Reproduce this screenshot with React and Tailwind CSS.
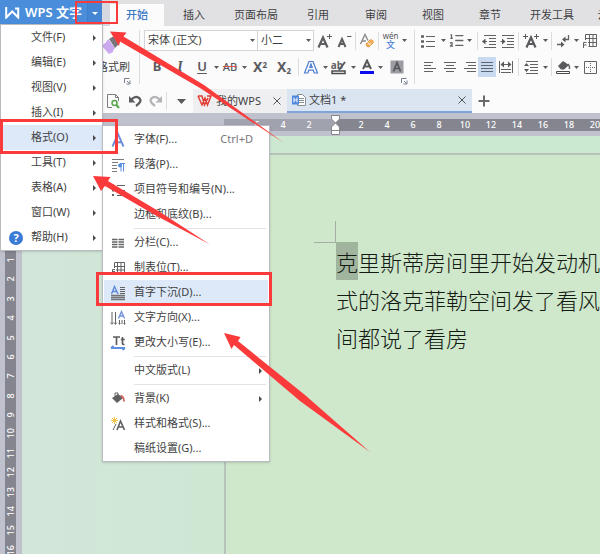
import React, { useState } from "react";
import { ListOrdered } from "lucide-react";

const ribbonTabs = [
  { label: "插入", width: "w-[60px]" },
  { label: "页面布局", width: "w-16" },
  { label: "引用", width: "w-[60px]" },
  { label: "审阅", width: "w-14" },
  { label: "视图", width: "w-[58px]" },
  { label: "章节", width: "w-14" },
  { label: "开发工具", width: "w-[68px]" },
  { label: "云服务", width: "w-14" },
];

const mainMenu = [
  "文件(F)",
  "编辑(E)",
  "视图(V)",
  "插入(I)",
  "格式(O)",
  "工具(T)",
  "表格(A)",
  "窗口(W)",
  "帮助(H)",
];

const formatMenu = [
  { label: "字体(F)...", icon: FontIcon, shortcut: "Ctrl+D" },
  { label: "段落(P)...", icon: ParagraphIcon },
  { label: "项目符号和编号(N)...", icon: ListIcon },
  { label: "边框和底纹(B)..." },
  { divider: true },
  { label: "分栏(C)...", icon: ColumnsIcon },
  { label: "制表位(T)...", icon: TabStopIcon },
  { label: "首字下沉(D)...", icon: DropCapIcon },
  { label: "文字方向(X)...", icon: DirectionIcon },
  { label: "更改大小写(E)...", icon: CaseIcon },
  { divider: true },
  { label: "中文版式(L)", more: true },
  { divider: true },
  { label: "背景(K)", icon: BackgroundIcon, more: true },
  { label: "样式和格式(S)...", icon: StylesIcon },
  { label: "稿纸设置(G)..." },
];

const rulerLeft = ["6", "4", "2"];
const rulerRight = ["2", "4", "6", "8", "10", "12", "14", "16", "18", "20"];

function Svg({ size = 16, children }) {
  return (
    <svg
      width={size}
      height={size}
      viewBox={`0 0 ${size} ${size}`}
      fill="none"
      stroke="#626265"
      className="shrink-0"
      aria-hidden="true">
      {children}
    </svg>
  );
}

function FontIcon() {
  return (
    <Svg>
      <path d="M2.5 14.5 8 2l5.5 12.5M4.500 10.200h7" stroke="#6d8fd8" strokeWidth="1.900" />
    </Svg>
  );
}
function ParagraphIcon() {
  return (
    <Svg>
      <path d="M2 2.500h12M2 5.500h6M2 8.500h5M2 11.500h5M2 14.500h5" stroke="#7b7b7e" />
      <path d="M11 14.500V6.500M13.500 14.500V6.500M15 6.500h-5" stroke="#5b8fe0" />
      <circle cx="10" cy="8.500" r="2" fill="#5b8fe0" stroke="none" />
    </Svg>
  );
}
function ListIcon() {
  return (
    <Svg>
      <path d="M7 3.500h8M7 8.500h8M7 13.500h8" />
      <path d="M2 3.500h2M2 8.500h2M2 13h2" strokeWidth="2" />
    </Svg>
  );
}
function ColumnsIcon() {
  return (
    <Svg>
      <path
        d="M2 4.500h5.500M2 7h5.500M2 9.500h5.500M2 12h5.500M8.500 4.500H14M8.500 7H14M8.500 9.500H14M8.500 12H14"
        stroke="#666669"
        strokeWidth="1.300"
      />
    </Svg>
  );
}
function TabStopIcon() {
  return (
    <Svg>
      <path d="M4.500 8V2.500h10v11h-7M7.500 2.500v11M11 2.500v11M4.500 6.500h10M6 10h8.500" />
      <path d="M2.500 14V9.500H5M2.500 11.500H5" />
    </Svg>
  );
}
function DropCapIcon() {
  return (
    <Svg>
      <path d="m1.500 9 3-7.500L8 9M2.600 6.500h4.200" stroke="#5f8adb" strokeWidth="1.400" />
      <path d="M10 2.500h5M10 4.500h5M10 6.500h5M10 8.500h5" />
      <path d="M1 10.500h14M1 12.500h14M1 14.500h14" stroke="#737477" strokeWidth="1.300" />
    </Svg>
  );
}
function DirectionIcon() {
  return (
    <Svg>
      <path d="M2 2v12M5.500 2v12M9.500 10v4M12 10v4M14.500 10v4" />
      <path d="M.5 12.500 2 14.500l1.500-2M4 12.500l1.500 2 1.500-2M8.500 13.500l1 1 1-1M13.500 13.500l1 1 1-1" strokeWidth=".8" />
      <path d="m8.500 8.500 3-7 3 7M9.500 6h4" stroke="#6d8fd8" strokeWidth="1.300" />
    </Svg>
  );
}
function CaseIcon() {
  return (
    <Svg>
      <path d="M3 2h7M6.500 2v8M12.500 2v6.500q0 1 2 1M10.800 4.500h4" stroke="#5d5d60" strokeWidth="1.700" />
      <path d="M1 13h14M1 13l2.500-2M15 13l-2.500 2" stroke="#5b8fe0" strokeWidth="1.800" />
    </Svg>
  );
}
function BackgroundIcon() {
  return (
    <Svg>
      <path d="M2 7 8 3l5 4-6 5z" fill="#5f5f62" stroke="none" />
      <path d="M5 5V2h3v3" />
      <path d="M10.500 4.500q3.500 1 3.500 6" stroke="#d3645f" strokeWidth="1.800" />
    </Svg>
  );
}
function StylesIcon() {
  return (
    <Svg>
      <path d="M4.500 1v7M1 4.500h7M2 2l5 5M7 2 2 7" stroke="#f1c14b" />
      <path d="m7 14 3.500-9 4 9M8 11h5" stroke="#5f5f62" strokeWidth="1.600" />
      <path d="m3 14 3-6" />
    </Svg>
  );
}

function Caret() {
  return (
    <span className="flex w-2 shrink-0 justify-center">
      <svg width="5" height="3" viewBox="0 0 5 3" aria-hidden="true">
        <path d="M0 0h5L2.500 3z" fill="#5b5b5e" />
      </svg>
    </span>
  );
}

function Sep() {
  return (
    <span className="flex w-[5px] shrink-0 justify-center">
      <span className="h-[18px] w-px bg-[#dddde0]" />
    </span>
  );
}

function Tool({ label, width = "w-5", active, children }) {
  return (
    <button
      type="button"
      aria-label={label}
      className={`flex h-5 shrink-0 items-center justify-center ${width} ${
        active ? "bg-[#c9daf0]" : ""
      }`}>
      {children}
    </button>
  );
}

function Launcher() {
  return (
    <svg width="7" height="7" viewBox="0 0 7 7" fill="none" stroke="#77808f" aria-hidden="true">
      <path d="M.5 5V.5h5M3 3l2.500 2.500M6 2.500v3.500H2.500" />
    </svg>
  );
}

function Combo({ label, value, width }) {
  return (
    <label className={`flex h-[21px] shrink-0 items-center border border-[#d4d4d8] bg-white pr-px ${width}`}>
      <select
        aria-label={label}
        className="h-full min-w-0 flex-1 appearance-none bg-transparent pl-[3px] text-[11px] text-[#3f3f42] outline-none">
        <option>{value}</option>
      </select>
      <Caret />
    </label>
  );
}

function TitleBar({ tab, setTab }) {
  return (
    <div className="flex h-[26px] shrink-0 items-end bg-[#e1e1e3]">
      <div className="flex h-[26px] w-[102px] shrink-0 bg-[#4a8edb] text-white">
        <button
          type="button"
          className="flex h-[26px] w-[87px] items-center gap-[5px] pl-[5px] text-[13px] font-semibold whitespace-nowrap">
          <svg width="15" height="12" viewBox="0 0 15 12" fill="none" stroke="#fff" strokeWidth="2" className="shrink-0" aria-hidden="true">
            <path d="M1.200 0v10.500l6-6 6 6V1.500H10" />
          </svg>
          WPS 文字
        </button>
        <button
          type="button"
          aria-label="菜单"
          className="flex flex-1 items-center justify-center border-l border-[#3f7fc9] bg-[#4486d3]">
          <svg width="6" height="3" viewBox="0 0 6 3" aria-hidden="true">
            <path d="M0 0h6L3 3z" fill="#fff" />
          </svg>
        </button>
      </div>
      <div className="h-[26px] w-2 shrink-0 bg-[#d6d8df]" />
      <nav className="flex h-[22px] min-w-0 flex-1 overflow-hidden">
        <button
          type="button"
          onClick={() => setTab("开始")}
          className={`h-[22px] w-[54px] shrink-0 text-[11px] ${
            tab === "开始" ? "bg-[#fbfbfc] font-medium text-[#3b78c6]" : ""
          }`}>
          开始
        </button>
        {ribbonTabs.map((item) => (
          <button
            key={item.label}
            type="button"
            onClick={() => setTab(item.label)}
            className={`h-[22px] shrink-0 text-[11px] whitespace-nowrap ${item.width} ${
              tab === item.label ? "bg-[#fbfbfc] text-[#3b78c6]" : ""
            }`}>
            {item.label}
          </button>
        ))}
      </nav>
    </div>
  );
}

function ClipboardGroup() {
  return (
    <div className="flex w-[139px] shrink-0 flex-col items-end pt-[9px] pr-[9px]">
      <div className="flex w-[34px] flex-col items-center">
        <svg width="20" height="20" viewBox="0 0 20 20" className="mr-[7px]" aria-hidden="true">
          <path d="m9 4 5-3 5 8-4 4z" fill="#77777a" />
          <path d="m8 4 7 9q-2 2-2 4l-4 2-8-9q4 0 7-6z" fill="#cba9ee" />
        </svg>
      </div>
      <button type="button" className="mt-1 text-[11px] leading-4 whitespace-nowrap">
        格式刷
      </button>
      <div className="mt-[3px] -mr-px">
        <Launcher />
      </div>
    </div>
  );
}

function FontGroup() {
  return (
    <div className="flex w-[275px] shrink-0 flex-col gap-[6px]">
      <div className="flex h-[21px] items-center pl-1">
        <Combo label="字体" value="宋体 (正文)" width="w-[114px]" />
        <Combo label="字号" value="小二" width="-ml-px w-[57px]" />
        <Tool label="增大字号" width="w-[22px]">
          <Svg>
            <path d="m1.500 14.500 4.500-10 4.500 10M3.500 11h5.500" stroke="#5f5f62" strokeWidth="2.200" />
            <path d="M10 3.500h5M12.500 1v5" stroke="#5f5f62" />
          </Svg>
        </Tool>
        <Tool label="减小字号" width="w-[17px]">
          <Svg>
            <path d="m1.500 14 3.500-8 3.500 8M3 11h4.500" stroke="#5f5f62" strokeWidth="2" />
            <path d="M10 3.500h4.500" stroke="#5f5f62" />
          </Svg>
        </Tool>
        <Sep />
        <Tool label="清除格式" width="w-[18px]">
          <Svg>
            <path d="m1.500 11 4.500-9.500 3 6M3.500 8H7" stroke="#8a8a8d" strokeWidth="1.400" />
            <path d="m7 11 4-4q2-1 3 1t-1 3l-3 3q-3 0-3-3z" fill="#f3b468" stroke="#e89a3f" />
            <path d="M9 9.500 12 12.500" stroke="#fff" />
          </Svg>
        </Tool>
        <Sep />
        <Tool label="拼音指南" width="w-[19px]">
          <span className="flex flex-col items-center text-[#55555a]">
            <span className="text-[8px] leading-[8px]">wén</span>
            <span className="text-[9px] leading-[10px] font-medium text-[#4e83dc]">文</span>
          </span>
        </Tool>
        <Caret />
      </div>
      <div className="flex h-5 items-center pl-[6px] text-[#5a5a5d]">
        <Tool label="加粗" width="w-[22px]">
          <b className="text-[13px]">B</b>
        </Tool>
        <Tool label="倾斜" width="w-6">
          <i className="font-serif text-sm font-bold">I</i>
        </Tool>
        <Tool label="下划线">
          <span className="text-[13px] font-semibold underline underline-offset-2">U</span>
        </Tool>
        <Caret />
        <Tool label="删除线">
          <span className="text-[11px] font-medium line-through decoration-[#d9534f]">AB</span>
        </Tool>
        <Caret />
        <Tool label="上标" width="w-6">
          <span className="text-sm leading-none font-bold">
            X<sup className="text-[8px]">2</sup>
          </span>
        </Tool>
        <Tool label="下标" width="w-6">
          <span className="text-sm leading-none font-bold">
            X<sub className="text-[8px]">2</sub>
          </span>
        </Tool>
        <Sep />
        <Tool label="文字效果">
          <Svg>
            <path d="M1.500 14 6 2.500h4L14.500 14h-3.300l-1-2.800H5.800l-1 2.800zM6.800 8.500h2.400L8 5z" stroke="#4d7bd0" strokeWidth="1.200" />
          </Svg>
        </Tool>
        <Caret />
        <Tool label="突出显示">
          <Svg>
            <text x="6" y="10" fontSize="10" fontWeight="700" textAnchor="middle" fill="#5f5f62" stroke="none">
              ab
            </text>
            <path d="m8 11 6-8" stroke="#5a5a5d" strokeWidth="2" />
            <path d="M1 12h13v2.500H1z" fill="#fff" stroke="#4b4b4e" strokeWidth="1.500" />
          </Svg>
        </Tool>
        <Caret />
        <Tool label="字体颜色" width="w-[19px]">
          <Svg>
            <path d="m4 10 4-8.500L12 10M5.500 7.500h5" stroke="#5a5a5d" strokeWidth="2" />
            <path d="M1 13.500h14" stroke="#0c0cf0" strokeWidth="3" />
          </Svg>
        </Tool>
        <Caret />
        <Tool label="字符底纹" width="w-[26px]">
          <Svg>
            <path d="M1.500 1.500h13v13h-13z" fill="#9b9da3" stroke="none" />
            <path d="m4.500 12.500 3.500-9 3.500 9M5.800 9.500h4.500" stroke="#55565b" strokeWidth="1.700" />
          </Svg>
        </Tool>
      </div>
      <div className="-mt-[5px] flex justify-end pr-[7px]">
        <Launcher />
      </div>
    </div>
  );
}

function ParagraphGroup() {
  return (
    <div className="flex min-w-0 flex-1 flex-col gap-[6px] overflow-hidden">
      <div className="flex h-[21px] items-center pl-[2px]">
        <Tool label="项目符号" width="w-[22px]">
          <Svg>
            <path d="M6 3.500h9M6 8.500h9M6 13.500h9" />
            <path d="M1 3.500h3M1 8.500h3M1 13.500h3" strokeWidth="2.500" />
          </Svg>
        </Tool>
        <Caret />
        <Tool label="编号" width="w-[18px]">
          <ListOrdered size={17} strokeWidth={1.8} color="#626265" className="shrink-0" />
        </Tool>
        <Caret />
        <span className="w-[2px] shrink-0" />
        <Sep />
        <Tool label="减少缩进" width="w-[18px]">
          <Svg>
            <path d="M3 2.500h12M8 5.500h7M8 8.500h7M8 11.500h7M3 14.500h12M1.500 8.500H6" />
            <path d="M1 8.500 4.500 5.500v6z" fill="#5a5a5d" stroke="none" />
          </Svg>
        </Tool>
        <Tool label="增加缩进" width="w-[18px]">
          <Svg>
            <path d="M3 2.500h12M8 5.500h7M8 8.500h7M8 11.500h7M3 14.500h12M1.500 8.500H6" />
            <path d="M6.500 8.500 3 5.500v6z" fill="#5a5a5d" stroke="none" />
          </Svg>
        </Tool>
        <Sep />
        <Tool label="中文版式">
          <Svg>
            <path d="m3.500 14.500 4.500-10 4.500 10M5 11h6" stroke="#5a5a5d" strokeWidth="2.200" />
            <path d="M0 3.500h5M2.500 1v5M11 3.500h5M13.500 1v5" stroke="#5a5a5d" />
          </Svg>
        </Tool>
        <Caret />
        <Sep />
        <Tool label="显示段落标记" width="w-[18px]">
          <Svg>
            <path d="M13.500 2v4.500H9M2 11.500h5" strokeWidth="1.300" />
            <path d="m7 6.500 3.500-3v6zM9.500 11.500 6 8.500v6z" fill="#5a5a5d" stroke="none" />
          </Svg>
        </Tool>
        <Caret />
        <Tool label="表格">
          <Svg>
            <path d="M3.500 7V1.500h11v12h-8M7.500 1.500v12M11 1.500v12M3.500 5.500h11M6 9.500h8.500M1.500 15V9.500h3M1.500 12h3" />
          </Svg>
        </Tool>
      </div>
      <div className="flex h-5 items-center pl-[5px]">
        <Tool label="左对齐">
          <Svg>
            <path d="M2 3.500h9M2 6.500h7M2 9.500h12M2 12.500h9" />
          </Svg>
        </Tool>
        <Tool label="居中">
          <Svg>
            <path d="M2 3.500h12M4 6.500h8M2 9.500h12M4 12.500h8" />
          </Svg>
        </Tool>
        <Tool label="右对齐" width="w-[18px]">
          <Svg>
            <path d="M5 3.500h10M7 6.500h8M3 9.500h12M6 12.500h9" />
          </Svg>
        </Tool>
        <Tool label="两端对齐" width="w-[18px]" active>
          <Svg>
            <path d="M2 3.500h12M2 6.500h12M2 9.500h12M2 12.500h12" stroke="#5d6775" />
          </Svg>
        </Tool>
        <Tool label="分散对齐">
          <Svg>
            <path d="M1.500 2v12M14.500 2v12M3 5.500h10M3 10.500h10M3 13.500h10" />
            <path d="M2.500 5.500 6 2.500v6zM13.500 5.500 10 2.500v6z" fill="#5a5a5d" stroke="none" />
          </Svg>
        </Tool>
        <Sep />
        <Tool label="行距">
          <Svg>
            <path d="M3 2.500h12M7 5.500h8M7 8.500h8M7 11.500h8M3 14.500h12" />
            <path d="m1 7 2.500-3L6 7zM1 10l2.500 3L6 10z" fill="#5a5a5d" stroke="none" />
          </Svg>
        </Tool>
        <Caret />
        <Sep />
        <Tool label="底纹颜色" width="w-[18px]">
          <Svg>
            <path d="m3 7 5-5 6 4-5 4.500H6z" fill="#5a5a5d" stroke="none" />
            <path d="M13 5q2 2 1.500 5" strokeWidth="1.500" />
            <path d="M1.500 12.500h13v2h-13z" fill="#fff" stroke="#4b4b4e" />
          </Svg>
        </Tool>
        <Caret />
        <Tool label="边框">
          <Svg>
            <path d="M2.500 2.500h12v12h-12z" />
            <path d="M8.500 4v9M4 8.500h9" strokeDasharray="1 1" />
          </Svg>
        </Tool>
      </div>
    </div>
  );
}

function Ribbon() {
  return (
    <div className="flex h-[63px] shrink-0 overflow-hidden bg-[#fbfbfc]">
      <ClipboardGroup />
      <div className="mt-1 h-[54px] w-px shrink-0 bg-[#dcdcdf]" />
      <div className="flex min-w-0 flex-1 pt-1">
        <FontGroup />
        <div className="-ml-px h-[54px] w-px shrink-0 bg-[#dcdcdf]" />
        <ParagraphGroup />
      </div>
    </div>
  );
}

function CloseIcon() {
  return (
    <svg width="8" height="8" viewBox="0 0 8 8" stroke="#55565a" aria-hidden="true">
      <path d="m.5.5 7 7M7.500.5l-7 7" />
    </svg>
  );
}

function DocumentTabs() {
  return (
    <div className="flex h-6 shrink-0 items-stretch overflow-hidden bg-[#fbfbfc] pl-[103px]">
      <div className="flex w-[90px] shrink-0 items-center">
        <Tool label="打印预览">
          <Svg>
            <path d="M7 14.500H2.500v-13h8l3 3V8M10.500 1.500v3h3" stroke="#7d7d80" />
            <circle cx="9.500" cy="10" r="2.500" stroke="#5aa84c" strokeWidth="1.500" />
            <path d="m11.500 12 2.500 3" stroke="#5aa84c" strokeWidth="2" />
          </Svg>
        </Tool>
        <Tool label="撤销" width="w-6">
          <Svg>
            <path d="M4 7q4-5 8-2t-3 8" stroke="#5d5d60" strokeWidth="2.200" />
            <path d="M2 3v6.500h6.500z" fill="#5d5d60" stroke="none" />
          </Svg>
        </Tool>
        <Tool label="恢复" width="w-[17px]">
          <Svg>
            <path d="M12 7q-4-5-8-2t3 8" stroke="#b4b4b7" strokeWidth="2.200" />
            <path d="M14 3v6.500H7.500z" fill="#b4b4b7" stroke="none" />
          </Svg>
        </Tool>
        <Sep />
        <button type="button" aria-label="更多" className="flex flex-1 justify-center">
          <svg width="9" height="5" viewBox="0 0 9 5" aria-hidden="true">
            <path d="M0 0h9L4.500 5z" fill="#5b5b5e" />
          </svg>
        </button>
      </div>
      <div className="flex w-[94px] shrink-0 items-center bg-[#efeff1] pr-[6px] pl-1">
        <svg width="15" height="12" viewBox="0 0 15 12" fill="none" stroke="#e23d36" strokeWidth="1.500" aria-hidden="true">
          <path d="M1 1h4l2.500 9L11 3M1 1l4 9 3-7 2.500 7L14 1h-4" />
        </svg>
        <button type="button" className="ml-1 flex-1 text-left text-[11px] whitespace-nowrap">
          我的WPS
        </button>
        <button type="button" aria-label="关闭 我的WPS">
          <CloseIcon />
        </button>
      </div>
      <div className="flex w-[185px] shrink-0 items-center border-b-2 border-[#7fa5d8] bg-[#dbe5f2] pr-[6px] pl-1">
        <Svg>
          <path d="M6.500 2.500h5l3 3v8h-8zM8 6.500h5M8 8.500h5M8 10.500h5" stroke="#8b8d94" fill="#fff" />
          <path d="M1 3.500h7v9H1z" fill="#4d86dc" stroke="none" />
          <path d="M3 5.500v5M6 5.500v5M3 8h3" stroke="#fff" />
        </Svg>
        <button type="button" className="ml-[2px] flex-1 text-left text-[11px]">
          文档1 *
        </button>
        <button type="button" aria-label="关闭 文档1">
          <CloseIcon />
        </button>
      </div>
      <button type="button" aria-label="新建" className="flex w-6 shrink-0 items-center justify-center">
        <svg width="12" height="12" viewBox="0 0 12 12" stroke="#6a6a6d" strokeWidth="2" aria-hidden="true">
          <path d="M6 .5v11M.5 6h11" />
        </svg>
      </button>
    </div>
  );
}

function HorizontalRuler() {
  return (
    <div className="flex h-[23px] shrink-0 items-center overflow-hidden bg-[#bfc2cc] pl-56 text-[9px] leading-3 font-medium text-white">
      <div className="flex h-3 w-28 shrink-0 bg-[#a0a2ad] pl-5">
        {rulerLeft.map((n) => (
          <span key={n} className="w-[26px] text-center">
            {n}
          </span>
        ))}
      </div>
      <div className="relative flex h-3 flex-1 bg-[#84858e] pl-3">
        <svg
          width="9"
          height="20"
          viewBox="0 0 9 20"
          fill="#fff"
          stroke="#85868c"
          className="absolute -top-1 -left-[5px]"
          aria-hidden="true">
          <path d="M.5.5h8v3.500l-4 4-4-4zM.5 15.500V12l4-4 4 4v7.500h-8zM.5 15.500h8" />
        </svg>
        {rulerRight.map((n) => (
          <span key={n} className="w-[26px] shrink-0 text-center">
            {n}
          </span>
        ))}
      </div>
    </div>
  );
}

function VerticalRuler() {
  return (
    <div className="flex w-[22px] shrink-0 bg-[#bfc2cc] pl-[5px]">
      <div className="h-full w-[11px] bg-[#84858e] pt-[114px]">
        <div className="grid h-[310px] auto-rows-fr text-[9px] leading-[11px] font-medium text-white">
          {Array.from({ length: 16 }, (_, i) => (
            <span
              key={i}
              className="flex rotate-180 items-center justify-center [writing-mode:vertical-rl]">
              {i + 1}
            </span>
          ))}
        </div>
      </div>
    </div>
  );
}

function Page() {
  return (
    <div className="flex min-w-0 flex-1 bg-linear-to-r from-[#d3e6da] to-[#cbe8d0] to-50% pt-[17px] pl-[202px]">
      <div className="min-w-0 flex-1 overflow-hidden border-t-2 border-l-2 border-[#b7c3ba] bg-[#cfe7cb] pt-[66px] pl-[88px]">
        <div className="h-[22px] w-[22px] border-r border-b border-[#a5aea4]" />
        <p className="-mt-px pl-[22px] font-['Noto_Sans_CJK_SC',sans-serif] text-[22px] leading-[38px] font-light whitespace-nowrap text-[#141a14]">
          <span className="inline-block bg-[#a1b49e]">克</span>
          里斯蒂房间里开始发动机
          <br />
          式的洛克菲勒空间发了看风
          <br />
          间都说了看房
        </p>
      </div>
    </div>
  );
}

function MoreArrow() {
  return (
    <svg width="3" height="6" viewBox="0 0 3 6" aria-hidden="true">
      <path d="M0 0v6l3-3z" fill="#4a4a4d" />
    </svg>
  );
}

function MainMenu({ open, setOpen }) {
  return (
    <ul className="absolute top-6 left-0 w-[103px] border border-[#b9bbc1] bg-white shadow-sm">
      {mainMenu.map((label) => (
        <li key={label}>
          <button
            type="button"
            onClick={() => setOpen(label)}
            className={`flex h-[25px] w-full items-center pr-[6px] text-left text-[11px] whitespace-nowrap ${
              open === label ? "bg-[#dde9f8]" : ""
            }`}>
            <span className="flex w-[30px] justify-center">
              {label === "帮助(H)" && (
                <span className="flex size-[14px] items-center justify-center rounded-full bg-[#3a7bd5] text-[11px] leading-none font-bold text-white">
                  ?
                </span>
              )}
            </span>
            <span className="flex-1">{label}</span>
            <MoreArrow />
          </button>
        </li>
      ))}
    </ul>
  );
}

function FormatMenu() {
  return (
    <ul className="absolute top-[125px] left-[102px] w-[168px] border border-[#b9bbc1] bg-white pt-px shadow-sm">
      {formatMenu.map((item, i) =>
        item.divider ? (
          <li key={i} className="my-px mr-[3px] ml-[31px] h-px bg-[#e4e4e6]" />
        ) : (
          <li key={i} className="px-px">
            <button
              type="button"
              className={`flex h-[25px] w-full items-center pr-[6px] text-left text-[11px] whitespace-nowrap ${
                item.label.startsWith("首字下沉") ? "bg-[#dde9f8]" : ""
              }`}>
              <span className="flex w-[30px] pl-[6px]">{item.icon && <item.icon />}</span>
              <span className="flex-1">{item.label}</span>
              {item.shortcut && <span className="pr-[9px] text-[#77777a]">{item.shortcut}</span>}
              {item.more && <MoreArrow />}
            </button>
          </li>
        )
      )}
    </ul>
  );
}

// red boxes and arrows that walk the reader through the steps
function Annotations() {
  return (
    <div className="pointer-events-none absolute inset-0">
      <div className="absolute top-px left-[75px] h-[23px] w-[43px] border-2 border-[#fb3b3b]" />
      <div className="absolute top-[119px] left-0 h-[35px] w-[118px] border-3 border-[#fb3b3b]" />
      <div className="absolute top-[272px] left-24 h-[34px] w-44 border-3 border-[#fb3b3b]" />
      <svg width="600" height="554" viewBox="0 0 600 554" fill="#fb3b3b" className="absolute top-0 left-0" aria-hidden="true">
        <path d="M110 31.500 126.500 32.500 123.500 36.500 204 85 284 143 200 88 120 41.500 119 46z" />
        <path d="M93 176 110.500 177 108 181 160 212 210 244.500 155 215 105 186 101 191z" />
        <path d="M224 333 240.500 337 238 341 305 395 370 452 300 401 234 345 231.500 349z" />
      </svg>
    </div>
  );
}

function App() {
  const [tab, setTab] = useState("开始");
  const [open, setOpen] = useState("格式(O)");

  return (
    <div className="relative flex h-screen w-full flex-col overflow-hidden bg-[#fbfbfc] font-['Noto_Sans','Noto_Sans_CJK_SC',sans-serif] text-[#3f3f42]">
      <TitleBar tab={tab} setTab={setTab} />
      <Ribbon />
      <DocumentTabs />
      <HorizontalRuler />
      <div className="flex min-h-0 flex-1 overflow-hidden">
        <VerticalRuler />
        <Page />
      </div>
      <MainMenu open={open} setOpen={setOpen} />
      {open === "格式(O)" && <FormatMenu />}
      <Annotations />
    </div>
  );
}

export default App;
